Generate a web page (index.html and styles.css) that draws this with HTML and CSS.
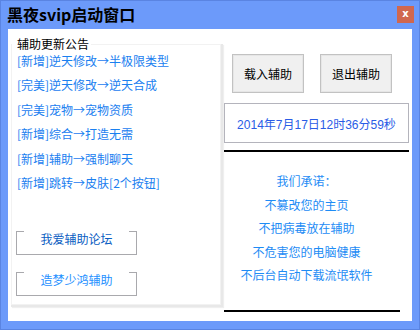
FILE: index.html
```html
<!DOCTYPE html>
<html>
<head>
<meta charset="utf-8">
<link rel="stylesheet" href="styles.css">
</head>
<body>
<div class="window">
  <div class="titlebar">
    <span class="title">黑夜svip启动窗口</span>
    <span class="close">x</span>
  </div>
  <div class="content">
    <div class="left">
      <div class="legend">辅助更新公告</div>
      <div class="panel">
        <ul class="notes">
          <li>[新增]逆天修改→半极限类型</li>
          <li>[完美]逆天修改→逆天合成</li>
          <li>[完美]宠物→宠物资质</li>
          <li>[新增]综合→打造无需</li>
          <li>[新增]辅助→强制聊天</li>
          <li>[新增]跳转→皮肤[2个按钮]</li>
        </ul>
        <div class="links">
          <div class="linkbox dark"><span class="lt"></span><span class="rt"></span>我爱辅助论坛</div>
          <div class="linkbox"><span class="lt"></span><span class="rt"></span>造梦少鸿辅助</div>
        </div>
      </div>
    </div>
    <div class="right">
      <div class="buttons">
        <div class="btn">载入辅助</div>
        <div class="btn">退出辅助</div>
      </div>
      <div class="date">2014年7月17日12时36分59秒</div>
      <div class="rule"></div>
      <div class="promise">
        <div>我们承诺：</div>
        <div>不篡改您的主页</div>
        <div>不把病毒放在辅助</div>
        <div>不危害您的电脑健康</div>
        <div>不后台自动下载流氓软件</div>
      </div>
      <div class="rule short"></div>
    </div>
  </div>
</div>
</body>
</html>
```
FILE: styles.css
```css
html, body {
  margin: 0;
  padding: 0;
  width: 420px;
  height: 330px;
  overflow: hidden;
  font-family: "Noto Sans CJK SC", sans-serif;
}
.window {
  box-sizing: border-box;
  width: 420px;
  height: 330px;
  background: #6c9afa;
  border: 1px solid #5a84e2;
  display: flex;
  flex-direction: column;
}
.titlebar {
  height: 28px;
  display: flex;
  align-items: flex-start;
  justify-content: space-between;
  padding: 0 6px 0 6px;
}
.title {
  font-weight: bold;
  font-size: 16px;
  line-height: 16px;
  margin-top: 5px;
  color: #000;
}
.close {
  width: 17px;
  height: 17px;
  margin-top: 5px;
  margin-right: -1px;
  background: #d0674f;
  color: #fff;
  font-family: "DejaVu Sans", sans-serif;
  font-weight: bold;
  font-size: 10px;
  line-height: 16px;
  text-align: center;
}
.content {
  background: #fff;
  margin: 0 7px 8px 7px;
  flex: 1;
  display: flex;
  padding: 0 0 0 4px;
  position: relative;
}
.left {
  width: 208px;
  display: flex;
  flex-direction: column;
  padding-top: 9px;
}
.legend {
  font-size: 12px;
  line-height: 12px;
  height: 12px;
  padding-left: 5px;
  color: #000;
  position: relative;
  z-index: 2;
  width: 74px;
  background: #fff;
  margin-bottom: -5px;
}
.panel {
  height: 259px;
  background: #fff;
  box-shadow: 0 0 0 1px #f2f2f2, 1px 1px 0 2px #e8e8e8, 2px 2px 1px 2px #efefef;
  display: flex;
  flex-direction: column;
}
.notes {
  list-style: none;
  margin: 0;
  padding: 4px 0 0 5px;
  color: #1a80f0;
  font-size: 12px;
  line-height: 24.4px;
}
.links {
  display: flex;
  flex-direction: column;
  gap: 17px;
  margin-top: 36px;
  padding-left: 4px;
}
.linkbox {
  position: relative;
  width: 119px;
  height: 22px;
  border: 1px solid #a9a9ad;
  border-top: none;
  padding-top: 1px;
  font-size: 12px;
  line-height: 14px;
  color: #1e90ff;
  text-align: center;
  box-sizing: content-box;
}
.linkbox.dark {
  color: #0a5dc2;
}
.linkbox .lt, .linkbox .rt {
  position: absolute;
  top: 0;
  width: 8px;
  height: 1px;
  background: #a9a9ad;
}
.linkbox .lt { left: -1px; }
.linkbox .rt { right: -1px; }
.right {
  width: 185px;
  margin-left: 4px;
  display: flex;
  flex-direction: column;
  padding-top: 25px;
}
.buttons {
  display: flex;
  gap: 16px;
  padding-left: 8px;
}
.btn {
  box-sizing: border-box;
  width: 72px;
  height: 39px;
  background: #f0f0f0;
  border: 1px solid #c2c2c2;
  box-shadow: inset 0 0 0 1px #e6e6e6;
  font-size: 12px;
  color: #000;
  display: flex;
  align-items: center;
  justify-content: center;
}
.date {
  box-sizing: border-box;
  margin-top: 10px;
  height: 40px;
  border: 1px solid #b4b4bc;
  font-family: "Liberation Sans", "Noto Sans CJK SC", sans-serif;
  font-size: 12px;
  color: #2a5ce6;
  display: flex;
  align-items: center;
  justify-content: center;
}
.rule {
  margin-top: 7px;
  height: 2px;
  background: #000;
}
.rule.short {
  width: 176px;
  margin-top: 23px;
}
.promise {
  margin-top: 17px;
  color: #1e8cf5;
  font-size: 12px;
  line-height: 23.5px;
  text-align: center;
  padding-right: 20px;
}
```
